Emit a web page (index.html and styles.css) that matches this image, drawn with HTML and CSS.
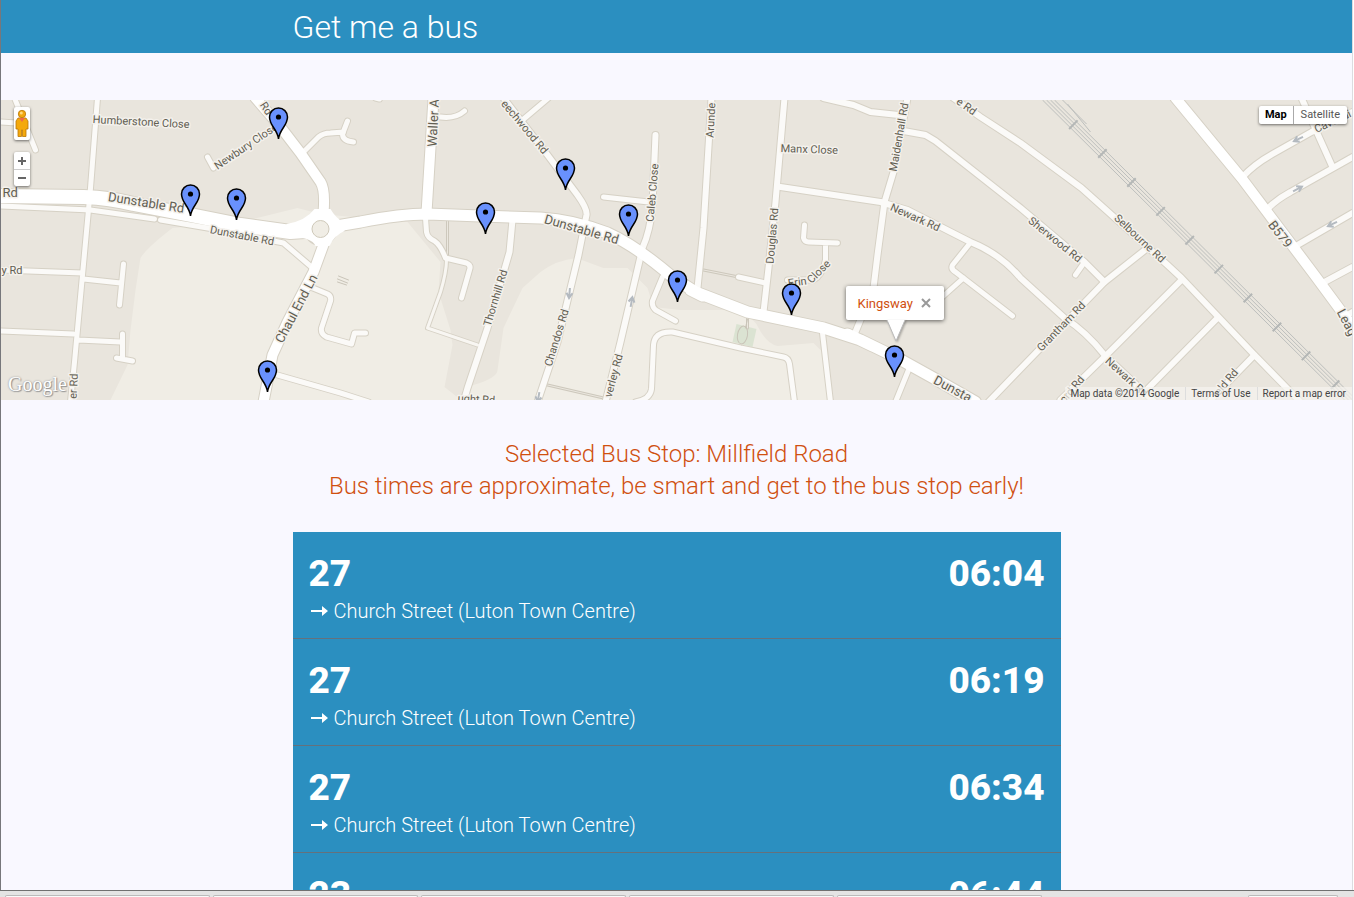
FILE: index.html
```html
<!DOCTYPE html>
<html lang="en">
<head>
<meta charset="utf-8">
<title>Get me a bus</title>
<link rel="stylesheet" href="styles.css">
</head>
<body>
<div class="page">
  <header class="header"><h1 class="wrap">Get me a bus</h1></header>

  <section class="map" aria-label="Map of bus stops">
    <svg class="canvas" viewBox="0 100 1352 300" preserveAspectRatio="xMidYMid slice">
      <defs>
        <g id="paths">
          <path d="M447 220V255M547 385L603 398M703 270L738 277M747 318V328"/>
        </g>
        <g id="lanes">
          <path d="M446 260Q446 272 440 292L427 328L477 345"/>
        </g>
        <g id="minor">
          <path d="M14 98L35 150M0 122L16 123M0 206L90 210L154 219M160 220L213 229L283 243L311 267"/>
          <path d="M97 98L90 188L82 275L74 362L70 402M0 270L82 273M83 279L120 283M123 264L119 305M0 331L73 334M78 340L120 342M122 334V359M116 358L132 361"/>
          <path d="M207 157L213 168M302 153L318 137Q323 133 330 133L343 132M347 121L342 134Q342 141 353 142"/>
          <path d="M310 287L327 294Q331 296 330 301L321 328Q320 334 326 337L351 344L354 333L365 333M277 375L340 393L368 402M375 98L379 99"/>
          <path d="M440 117Q455 119 464 111M425 218L426 232Q427 238 434 241Q440 245 445 258L466 263Q471 265 469 270L461 298"/>
          <path d="M522 120L548 98M603 197L648 202M662 277L652 301Q651 306 655 310L675 321M635 402Q650 399 651 389L653 345Q654 331 672 332L740 348L783 357Q788 358 789 364L794 402"/>
          <path d="M804 225L803 238Q804 242 808 242L837 243M825 244V260Q822 275 813 280L787 280M738 277L765 283M822 333L830 402M908 370L895 402"/>
          <path d="M968 245L952 265Q950 269 955 272L1012 316M963 278L935 303M1082 265L1075 275"/>
        </g>
        <g id="streets">
          <path d="M512 220L509 252L487 328L467 388L463 402M503 98L547 155L577 195Q587 209 586 215L578 255L557 342L537 402M655 135L652 205Q650 230 642 248L620 342L605 402"/>
          <path d="M711 98L703 228L697 288M784 98L775 202L768 268L763 312M780 187L880 202L907 210L970 242Q1000 254 1020 278L1064 318Q1086 332 1104 355L1154 402"/>
          <path d="M907 98L893 172L884 202L877 255L873 288L855 332M823 98L853 105L870 112L898 115M903 131L925 135L935 141L1020 208L1084 262L1104 282"/>
          <path d="M953 98L980 117L1020 143L1081 188L1167 265L1181 278L1254 355L1300 402M988 402L1014 375L1104 282L1147 248M1181 280L1106 355L1060 400M1217 318L1144 392M1254 355L1210 400"/>
          <path d="M1242 177Q1254 164 1272 154L1311 132L1352 112M1266 210Q1275 200 1290 192L1352 157M1301 98L1332 167M1297 245L1352 213M1324 282L1352 267M1344 317L1352 312"/>
        </g>
        <g id="major"><path d="M255 98L280 127L300 153L320 182Q325 190 323 213L320 229L324 242L313 272L287 322L272 355L263 402M433 98L426 213M1175 98L1241 178L1314 275L1348 321"/></g>
        <g id="trunk"><path d="M318 229L360 222Q400 214 427 214L480 216L540 218Q573 220 607 233Q636 246 673 278L695 292L747 312L823 328L860 340L897 358L933 378L975 402M690 290L702 296M847 334L872 346"/></g>
        <g id="dual"><path d="M0 196L83 197Q110 198 133 204L190 215L240 225L290 232L318 230"/></g>
        <g id="rail"><path d="M1042 100L1345 401"/></g>
        <g id="pin">
          <path class="pin-body" d="M0 22C-1 12-9 9-9 0A9 9 0 0 1 9 0C9 9 1 12 0 22Z"/>
          <circle r="2.6"/>
        </g>
        <g id="way"><path d="M-5 0H4M0-3L5 0L0 3"/></g>
      </defs>
      <rect class="land" y="100" width="1352" height="300"/>
      <path class="open" d="M240 222L297 208L320 214L407 222L440 262L438 292L450 330L452 345L444 387L463 402H109L127 365L130 330L135 290L140 258Q146 248 172 228Z"/>
      <path class="open" d="M462 402V390L473 385Q497 378 497 370L503 328L522 288L540 272Q556 260 576 258L603 268H627L647 288L653 307L680 310H730Q752 316 757 326Q766 344 777 346L813 343L822 352L830 402Z"/>
      <path class="park" d="M736 324L756 329L752 347L732 342Z"/>
      <g class="road">
        <use href="#paths" class="case-paths"/><use href="#paths" class="fill-paths"/>
        <use href="#lanes" class="case-lanes"/>
        <use href="#minor" class="case-minor"/><use href="#streets" class="case-streets"/>
        <use href="#major" class="case-major"/><use href="#trunk" class="case-trunk"/><use href="#dual" class="case-dual"/>
        <circle class="ring-case" cx="320" cy="229" r="12"/>
        <use href="#lanes" class="fill-lanes"/><use href="#minor" class="fill-minor"/><use href="#streets" class="fill-streets"/>
        <use href="#major" class="fill-major"/><use href="#trunk" class="fill-trunk"/><use href="#dual" class="fill-dual"/>
        <path class="junction" d="M286 224Q305 221 314 209H330Q335 218 344 223V231Q334 235 329 246H315Q312 237 286 236Z"/>
        <ellipse class="track" cx="742" cy="335" rx="5" ry="9" transform="rotate(10 742 335)"/>
        <path class="track" d="M747 319L745 328M338 276L348 280M337 279L347 283M337 282L346 285"/>
      </g>
      <circle class="island" cx="320" cy="229" r="8.5"/>
      <g class="rail"><use href="#rail"/><use href="#rail" x="4"/><use href="#rail" x="8"/><use href="#rail" x="12"/><path class="ties" d="M1048 100L1351 401"/><path d="M1062 100L1086 124M1067 104L1090 132"/></g>
      <g class="ways">
        <use href="#way" transform="translate(569 293) rotate(95)"/><use href="#way" transform="translate(631 302) rotate(-80)"/>
        <use href="#way" transform="translate(1298 139) rotate(155)"/><use href="#way" transform="translate(1297 189) rotate(-28)"/>
        <use href="#way" transform="translate(1332 224) rotate(155)"/><use href="#way" transform="translate(538 397) rotate(100)"/>
      </g>
      <g class="labels">
        <text transform="translate(92 123) rotate(3)">Humberstone Close</text>
        <text transform="translate(217 170) rotate(-34)">Newbury Close</text>
        <text transform="translate(259 105) rotate(57)">Rd</text>
        <text class="big" x="2" y="197">Rd</text>
        <text class="big" transform="translate(107 201) rotate(9)">Dunstable Rd</text>
        <text transform="translate(209 233) rotate(11)">Dunstable Rd</text>
        <text x="1" y="274">y Rd</text>
        <text transform="translate(76 399) rotate(-87)">er Rd</text>
        <text class="big" transform="translate(282 344) rotate(-62)">Chaul End Ln</text>
        <text class="big" transform="translate(436 147) rotate(-87)">Waller A</text>
        <text transform="translate(500 104) rotate(50)">eechwood Rd</text>
        <text class="big" transform="translate(543 223) rotate(16)">Dunstable Rd</text>
        <text transform="translate(653 222) rotate(-85)">Caleb Close</text>
        <text transform="translate(490 327) rotate(-73)">Thornhill Rd</text>
        <text transform="translate(551 367) rotate(-73)">Chandos Rd</text>
        <text transform="translate(611 398) rotate(-75)">verley Rd</text>
        <text transform="translate(457 402) rotate(3)">ught Rd</text>
        <text transform="translate(713 138) rotate(-87)">Arunde</text>
        <text transform="translate(780 152) rotate(2)">Manx Close</text>
        <text transform="translate(773 264) rotate(-85)">Douglas Rd</text>
        <text transform="translate(788 287) rotate(-8)">Erin</text>
        <text transform="translate(811 284) rotate(-45)">Close</text>
        <text transform="translate(896 172) rotate(-80)">Maidenhall Rd</text>
        <text transform="translate(889 210) rotate(24)">Newark Rd</text>
        <text transform="translate(955 103) rotate(36)">e Rd</text>
        <text transform="translate(1027 222) rotate(39)">Sherwood Rd</text>
        <text transform="translate(1113 219) rotate(43)">Selbourne Rd</text>
        <text transform="translate(1041 352) rotate(-46)">Grantham Rd</text>
        <text transform="translate(1104 362) rotate(42)">Newark Rd</text>
        <text transform="translate(1064 404) rotate(-50)">ord Rd</text>
        <text transform="translate(1217 398) rotate(-50)">ield Rd</text>
        <text class="big" transform="translate(932 383) rotate(28)">Dunsta</text>
        <text class="big" transform="translate(1267 225) rotate(52)">B579</text>
        <text class="big" transform="translate(1336 312) rotate(62)">Leag</text>
        <text transform="translate(1316 133) rotate(-25)">Cavendi</text>
      </g>
      <g class="pins">
        <use href="#pin" x="278" y="117"/><use href="#pin" x="190" y="194"/><use href="#pin" x="236" y="198"/>
        <use href="#pin" x="267" y="370"/><use href="#pin" x="485" y="212"/><use href="#pin" x="565" y="168"/>
        <use href="#pin" x="628" y="214"/><use href="#pin" x="677" y="280"/><use href="#pin" x="791" y="293"/><use href="#pin" x="894" y="355"/>
      </g>
    </svg>

    <div class="tools">
      <button class="box pegman" aria-label="Street View">
        <svg viewBox="0 0 16 33" width="16" height="33">
          <path fill="#f4a90c" stroke="#b97708" stroke-width=".8" d="M4 11H12L14 14V22H12V29.500H8.500V23H7.500V29.500H4V22H2V14Z"/>
          <path fill="#ef6a4c" d="M5 11H11L8 15Z"/>
          <circle cx="8" cy="7" r="3.700" fill="#f2a70f" stroke="#b97708" stroke-width=".8"/>
          <circle cx="7.300" cy="6" r="1.500" fill="#ffd97c"/>
        </svg>
      </button>
      <div class="box zoom">
        <button aria-label="Zoom in"><svg viewBox="0 0 8 8" width="8" height="8"><path d="M0 4H8M4 0V8"/></svg></button>
        <button aria-label="Zoom out"><svg viewBox="0 0 8 8" width="8" height="8"><path d="M0 4H8"/></svg></button>
      </div>
    </div>
    <div class="box types"><button class="active">Map</button><button>Satellite</button></div>
    <div class="bubble">
      <span>Kingsway</span>
      <button aria-label="Close"><svg viewBox="0 0 10 10" width="10" height="10"><path d="M1 1L9 9M9 1L1 9"/></svg></button>
      <svg class="tail" viewBox="0 0 20 22" width="20" height="22"><path d="M1 0L10 21L19 0"/></svg>
    </div>
    <span class="logo">Google</span>
    <div class="credits"><span>Map data ©2014 Google</span><a href="#terms">Terms of Use</a><a href="#report">Report a map error</a></div>
  </section>

  <main class="wrap">
    <h2 class="notice">Selected Bus Stop: Millfield Road<br>Bus times are approximate, be smart and get to the bus stop early!</h2>
    <ul class="times">
      <li><div class="row"><b>27</b><time>06:04</time></div><p><svg viewBox="0 0 18 12" width="18" height="12"><path d="M0 5H11V1L17 6L11 11V7H0Z"/></svg>Church Street (Luton Town Centre)</p></li>
      <li><div class="row"><b>27</b><time>06:19</time></div><p><svg viewBox="0 0 18 12" width="18" height="12"><path d="M0 5H11V1L17 6L11 11V7H0Z"/></svg>Church Street (Luton Town Centre)</p></li>
      <li><div class="row"><b>27</b><time>06:34</time></div><p><svg viewBox="0 0 18 12" width="18" height="12"><path d="M0 5H11V1L17 6L11 11V7H0Z"/></svg>Church Street (Luton Town Centre)</p></li>
      <li><div class="row"><b>23</b><time>06:44</time></div></li>
    </ul>
  </main>
</div>
<footer class="dock"><i></i><i></i><i></i><i></i><i></i><i class="last"></i></footer>
</body>
</html>
```
FILE: styles.css
```css
* { box-sizing: border-box; }
body {
  margin: 0;
  height: 100vh;
  display: flex;
  flex-direction: column;
  overflow: hidden;
  background: #fff;
  font-family: Roboto, "Liberation Sans", sans-serif;
}
h1, h2, p, ul { margin: 0; padding: 0; font-weight: 300; }
button { font: inherit; border: 0; padding: 0; margin: 0; background: none; color: inherit; cursor: pointer; display: block; }
svg { display: block; }

.page {
  flex: 1;
  min-height: 0;
  overflow: hidden;
  margin-right: 1px;
  border-left: 1px solid #77777b;
  border-right: 1px solid #dcdce0;
  background: #f9f8ff;
}
.wrap { width: 100%; max-width: 768px; margin: 0 auto; }
.header { background: #2b8fc0; color: #fff; margin-bottom: 47px; }
.header h1 { padding-top: 2px; font-size: 32px; line-height: 51px; font-weight: 300; }

.map { position: relative; height: 300px; overflow: hidden; background: #e9e5dd; }
.canvas { width: 100%; height: 100%; }
.land { fill: #e9e5dd; }
.open { fill: #f0ede5; }
.park { fill: #dbe3d2; }
.road { fill: none; stroke-linecap: round; stroke-linejoin: round; }
.case-paths { stroke: #cdc8bc; stroke-width: 3px; }
.fill-paths { stroke: #ebe7df; stroke-width: 1px; }
.case-lanes { stroke: #d6d1c5; stroke-width: 5px; }
.fill-lanes { stroke: #f8f6f2; stroke-width: 3px; }
.case-minor { stroke: #d6d1c5; stroke-width: 7px; }
.fill-minor { stroke: #fbfaf8; stroke-width: 5px; }
.case-streets { stroke: #d6d1c5; stroke-width: 8px; }
.fill-streets { stroke: #fbfaf8; stroke-width: 6px; }
.case-major { stroke: #d6d1c5; stroke-width: 12px; }
.fill-major { stroke: #fff; stroke-width: 10px; }
.case-trunk { stroke: #d6d1c5; stroke-width: 13px; }
.fill-trunk { stroke: #fff; stroke-width: 11px; }
.case-dual { stroke: #d6d1c5; stroke-width: 16px; }
.fill-dual { stroke: #fff; stroke-width: 14px; }
.ring-case { stroke: #d6d1c5; stroke-width: 10px; }
.junction { fill: #fff; }
.island { fill: #f0ede5; stroke: #cfc9ba; }
.track { stroke: #c9c4b8; }
.rail { fill: none; stroke: #bdbfbd; stroke-width: 1px; }
.ties { stroke: #b4b7b6; stroke-width: 12px; stroke-dasharray: 2 39; stroke-dashoffset: -34; }
.ways { fill: none; stroke: #b4bac0; stroke-width: 2px; }
.labels {
  fill: #625e52;
  font-size: 11px;
  stroke: #f4f1ec;
  stroke-width: 3px;
  stroke-linejoin: round;
  paint-order: stroke;
}
.labels .big { font-size: 13px; }
.pins { fill: #000; stroke: none; }
.pin-body { fill: #6991fd; stroke: #000; stroke-width: 1.5px; }

.box { background: #fff; border-radius: 2px; box-shadow: 0 1px 3px rgba(0, 0, 0, .55); }
.tools { position: absolute; top: 7px; left: 13px; display: grid; gap: 12px; }
.pegman { width: 16px; height: 33px; }
.zoom { width: 16px; }
.zoom button { width: 16px; height: 17px; display: grid; place-items: center; }
.zoom button + button { border-top: 1px solid #ccc; }
.zoom path { stroke: #666; stroke-width: 2px; }
.types { position: absolute; top: 6px; right: 5px; display: flex; font-size: 11px; line-height: 18px; color: #565656; }
.types button { padding: 0 7px; }
.types .active { color: #000; font-weight: 700; border-right: 1px solid #aaa; padding: 0 6px; }
.bubble {
  position: absolute;
  top: 186px;
  left: calc(50% + 169px);
  display: flex;
  align-items: center;
  gap: 8px;
  height: 34px;
  padding: 0 13px 0 12px;
  background: #fff;
  border-radius: 2px;
  box-shadow: 0 1px 4px rgba(0, 0, 0, .6);
  color: #d05010;
  font-size: 13px;
  font-weight: 400;
}
.bubble button path { stroke: #999; stroke-width: 2px; }
.tail { position: absolute; top: 34px; left: 40px; fill: #fff; stroke: #bbb; filter: drop-shadow(1px 1px 1px rgba(0, 0, 0, .3)); }
.logo {
  position: absolute;
  left: 7px;
  bottom: 4px;
  font-family: "Liberation Serif", serif;
  font-size: 20px;
  line-height: 24px;
  color: #fff;
  text-shadow: 0 0 2px #888, 1px 1px 1px #999;
}
.credits {
  position: absolute;
  right: 0;
  bottom: 0;
  display: flex;
  background: rgba(245, 243, 240, .7);
  font-size: 10px;
  line-height: 13px;
  color: #444;
}
.credits > * { padding: 0 6px 0 5px; color: inherit; text-decoration: none; }
.credits a { border-left: 1px solid #ddd; }

.notice { padding: 38px 0 30px; text-align: center; font-size: 24px; line-height: 32px; color: #d05010; }
.times { list-style: none; color: #fff; background: #2b8fc0; }
.times li { padding: 21px 16px 11px; min-height: 107px; border-bottom: 1px solid #65717c; }
.row { display: flex; justify-content: space-between; font-size: 37px; line-height: 42px; font-weight: 800; }
.row b { font-weight: 800; }
.times p { display: flex; align-items: center; gap: 5px; font-size: 20px; line-height: 32px; }
.times p svg { fill: #fff; margin-left: 2px; }

.dock {
  flex: none;
  display: flex;
  gap: 3px;
  height: 7px;
  padding: 4px 16px 0 5px;
  border-top: 1px solid #707070;
  background: #e4e4e4;
}
.dock i { flex: 0 1 205px; border: 1px solid #bbb; border-bottom: 0; border-radius: 3px 3px 0 0; background: #fafafa; }
.dock .last { flex-basis: 90px; margin-left: auto; }
```
